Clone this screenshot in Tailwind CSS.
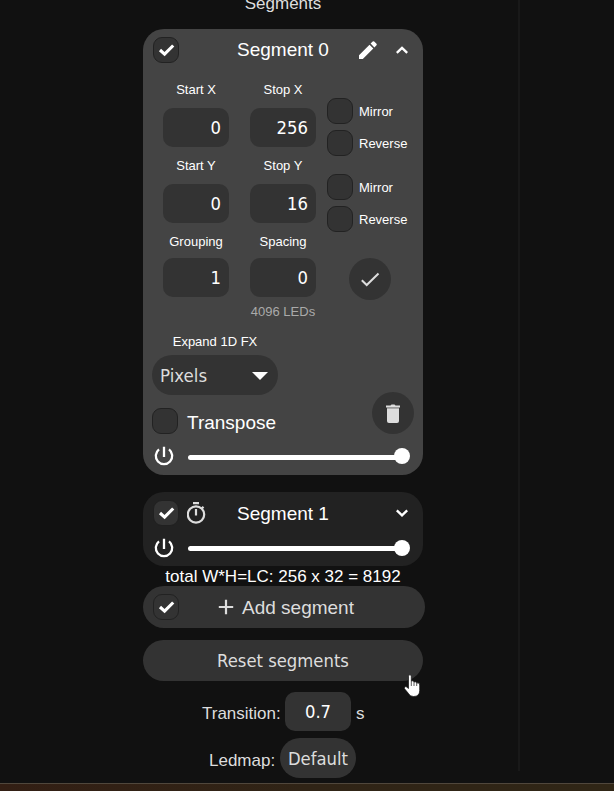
<!DOCTYPE html>
<html lang="en">
<head>
<meta charset="utf-8">
<title>Segments</title>
<script src="https://cdn.jsdelivr.net/npm/@tailwindcss/browser@4"></script>
</head>
<body class="bg-[#111]">
<svg class="hidden">
  <symbol id="tick" viewBox="0 0 26 26"><path d="M7 13 11.600 17.200 20.200 8.500" fill="none" stroke="#fff" stroke-width="3.100"/></symbol>
  <symbol id="power" viewBox="0 0 20 20"><path d="M10 .8V11M5 3.400a8.200 8.200 0 1 0 10 0" fill="none" stroke="#fff" stroke-width="2.300"/></symbol>
</svg>
<div class="relative flex h-[791px] w-[614px] flex-col overflow-hidden bg-[#111] font-['Liberation_Sans',Arial,sans-serif] text-white">
  <div class="flex h-[771px] w-[520px] shrink-0 flex-col border-r-2 border-[#191919] pl-[143px]">
    <div class="-mt-[6px] h-5 w-[280px] text-center text-[17px] leading-5 text-[#ddd]">Segments</div>

    <section class="mt-[15px] h-[446px] w-[280px] shrink-0 rounded-[21px] bg-[#444]">
      <header class="flex h-[41px] items-center pt-[1px] pl-[10px]">
        <span class="size-[26px] rounded-[9px] border border-[#222] bg-[#333]"><svg class="-m-px size-[26px]"><use href="#tick"/></svg></span>
        <h2 class="ml-[43px] w-[122px] text-center text-[19px] leading-6">Segment 0</h2>
        <svg class="ml-[14px] size-5" viewBox="0 0 20 20"><path d="M1 15.2V19h3.8L15.3 8.5 11.5 4.7zM18.5 5.3a1.100 1.100 0 0 0 0-1.500L16.200 1.500a1.100 1.100 0 0 0-1.500 0L12.600 3.600l3.800 3.800z" fill="#fff"/></svg>
        <svg class="ml-[18px] size-3" viewBox="0 0 12 12"><path d="M.8 8.800 6 3.800l5.200 5" fill="none" stroke="#fff" stroke-width="2.400"/></svg>
      </header>

      <div class="grid h-[251px] grid-cols-[86px_88px_1fr] grid-rows-[76px_76px_99px] pl-[10px] text-[13px] leading-4">
        <div class="flex flex-col items-center pt-3">Start X<div class="mt-[10px] h-[39px] w-[66px] rounded-[10px] bg-[#333] pr-2 text-right font-['DejaVu_Sans_Condensed','DejaVu_Sans',sans-serif] text-[18.300px] leading-[40px]">0</div></div>
        <div class="flex flex-col items-center pt-3">Stop X<div class="mt-[10px] h-[39px] w-[66px] rounded-[10px] bg-[#333] pr-2 text-right font-['DejaVu_Sans_Condensed','DejaVu_Sans',sans-serif] text-[18.300px] leading-[40px]">256</div></div>
        <div class="flex flex-col gap-1.5 pt-7">
          <div class="flex h-[26px] items-center gap-[6px]"><span class="size-[26px] rounded-[9px] border border-[#222] bg-[#333]"></span><span class="pt-[2px]">Mirror</span></div>
          <div class="flex h-[26px] items-center gap-[6px]"><span class="size-[26px] rounded-[9px] border border-[#222] bg-[#333]"></span><span class="pt-[2px]">Reverse</span></div>
        </div>
        <div class="flex flex-col items-center pt-3">Start Y<div class="mt-[10px] h-[39px] w-[66px] rounded-[10px] bg-[#333] pr-2 text-right font-['DejaVu_Sans_Condensed','DejaVu_Sans',sans-serif] text-[18.300px] leading-[40px]">0</div></div>
        <div class="flex flex-col items-center pt-3">Stop Y<div class="mt-[10px] h-[39px] w-[66px] rounded-[10px] bg-[#333] pr-2 text-right font-['DejaVu_Sans_Condensed','DejaVu_Sans',sans-serif] text-[18.300px] leading-[40px]">16</div></div>
        <div class="flex flex-col gap-1.5 pt-7">
          <div class="flex h-[26px] items-center gap-[6px]"><span class="size-[26px] rounded-[9px] border border-[#222] bg-[#333]"></span><span class="pt-[2px]">Mirror</span></div>
          <div class="flex h-[26px] items-center gap-[6px]"><span class="size-[26px] rounded-[9px] border border-[#222] bg-[#333]"></span><span class="pt-[2px]">Reverse</span></div>
        </div>
        <div class="flex flex-col items-center pt-3">Grouping<div class="mt-[8px] h-[39px] w-[66px] rounded-[10px] bg-[#333] pr-2 text-right font-['DejaVu_Sans_Condensed','DejaVu_Sans',sans-serif] text-[18.300px] leading-[40px]">1</div></div>
        <div class="flex flex-col items-center pt-3">Spacing<div class="mt-[8px] h-[39px] w-[66px] rounded-[10px] bg-[#333] pr-2 text-right font-['DejaVu_Sans_Condensed','DejaVu_Sans',sans-serif] text-[18.300px] leading-[40px]">0</div><div class="mt-[7px] text-[#aaa]">4096 LEDs</div></div>
        <div class="pt-9 pl-[22px]"><span class="flex size-[42px] items-center justify-center rounded-full bg-[#333]"><svg class="size-5" viewBox="0 0 20 20"><path d="M1.800 11.200 6.700 16 18.500 4.500" fill="none" stroke="#ddd" stroke-width="2"/></svg></span></div>
      </div>

      <div class="flex h-[115px] justify-between pr-[9px] pl-[9px]">
        <div class="w-[126px]">
          <div class="mt-[13px] text-center text-[13px] leading-4">Expand 1D FX</div>
          <div class="mt-[5px] flex h-10 items-center justify-between rounded-[20px] bg-[#333] pr-[10px] pl-2"><span class="pt-[2px] font-['DejaVu_Sans_Condensed','DejaVu_Sans',sans-serif] text-[18.500px] leading-5 text-[#ddd]">Pixels</span><svg class="mt-[2px] h-[8px] w-4" viewBox="0 0 16 8"><path d="M0 0h16L8 8z" fill="#fff"/></svg></div>
          <div class="mt-[13px] flex h-[26px] items-center gap-[9px] text-[19px]"><span class="size-[26px] shrink-0 rounded-[9px] border border-[#222] bg-[#333]"></span><span class="pt-[3px] leading-6">Transpose</span></div>
        </div>
        <span class="mt-[71px] flex size-[42px] items-center justify-center rounded-full bg-[#333]"><svg class="mt-px h-5 w-4" viewBox="0 0 16 20"><path d="M1 1.500h4.500L6.500 .500h3L10.500 1.500H15v2H1z" fill="#ddd"/><path d="M2 3.500h12V5H2z" fill="#aaa"/><path d="M2 5h12v12a2 2 0 0 1-2 2H4a2 2 0 0 1-2-2z" fill="#ddd"/></svg></span>
      </div>
      <div class="flex h-[39px] items-center pt-[3px] pl-[11px]">
        <svg class="mb-[2px] size-5"><use href="#power"/></svg>
        <div class="ml-[14px] flex h-4 w-[222px] items-center"><span class="h-[5px] w-[210px] rounded-l-full bg-white"></span><span class="-ml-1 size-4 shrink-0 -translate-y-[1px] rounded-full bg-white"></span></div>
      </div>
    </section>

    <section class="mt-[17px] h-[74px] w-[280px] shrink-0 rounded-[21px] bg-[#222]">
      <header class="flex h-[42px] items-center pl-[10px]">
        <span class="size-[26px] rounded-[9px] border border-[#202020] bg-[#333]"><svg class="-m-px size-[26px]"><use href="#tick"/></svg></span>
        <svg class="mb-px ml-2 size-[22px] shrink-0" viewBox="0 0 22 22"><g fill="none" stroke="#ddd" stroke-width="2.200"><circle cx="9" cy="12.500" r="8.200"/><path d="M6 1.100h6M9 7v6.500M14.500 6.800l2-2"/></g></svg>
        <h2 class="ml-[13px] w-[122px] pt-[2px] text-center text-[19px] leading-6">Segment 1</h2>
        <svg class="ml-[52px] size-3" viewBox="0 0 12 12"><path d="M.8 3.300 6 8.300l5.200-5" fill="none" stroke="#fff" stroke-width="2.400"/></svg>
      </header>
      <div class="flex h-[28px] items-center pt-[2px] pl-[11px]">
        <svg class="mb-[2px] size-5"><use href="#power"/></svg>
        <div class="ml-[14px] flex h-4 w-[222px] items-center"><span class="h-[5px] w-[210px] -translate-y-[1px] rounded-l-full bg-white"></span><span class="-ml-1 size-4 shrink-0 -translate-y-[1px] rounded-full bg-white"></span></div>
      </div>
    </section>

    <div class="h-5 w-[280px] pt-px text-center text-[17px] leading-5 whitespace-nowrap">total W*H=LC: 256 x 32 = 8192</div>

    <div class="flex h-[42px] w-[282px] shrink-0 items-center rounded-[21px] bg-[#333] pl-[10px]">
      <span class="size-[26px] rounded-[9px] border border-[#222] bg-[#333]"><svg class="-m-px size-[26px]"><use href="#tick"/></svg></span>
      <svg class="ml-[39px] size-4" viewBox="0 0 16 16"><path d="M8 .8v14.400M.8 8h14.400" stroke="#ddd" stroke-width="2.200"/></svg>
      <span class="ml-2 pt-[1px] text-[19px] leading-6 text-[#ddd]">Add segment</span>
    </div>

    <div class="mt-3 h-[41px] w-[280px] shrink-0 rounded-[21px] bg-[#333] text-center font-['DejaVu_Sans_Condensed','DejaVu_Sans',sans-serif] text-[18.300px] leading-[42px] text-[#ddd]">Reset segments</div>

    <div class="mt-[11px] flex h-[39px] shrink-0 items-center pl-[59px] text-[17px] text-[#ddd]"><span class="w-[83px] pt-[5px]">Transition:</span><span class="h-[39px] w-[66px] rounded-[10px] bg-[#333] text-center font-['DejaVu_Sans_Condensed','DejaVu_Sans',sans-serif] text-[18.300px] leading-[40px] text-white">0.7</span><span class="pt-[5px] pl-[5px]">s</span></div>
    <div class="mt-[7px] flex h-10 shrink-0 items-center pl-[66px] text-[17px] text-[#ddd]"><span class="w-[71px] pt-[6px]">Ledmap:</span><span class="h-10 w-[76px] rounded-[20px] bg-[#333] text-center font-['DejaVu_Sans_Condensed','DejaVu_Sans',sans-serif] text-[18.300px] leading-[42px]">Default</span></div>
  </div>
  <footer class="mt-3 h-2 w-full shrink-0 border-t border-[#50473c] bg-gradient-to-r from-[#331f14] via-[#302416] to-[#302616]"></footer>

  <svg class="absolute top-[674px] left-[403px] h-[24px] w-[18px]" viewBox="0 0 18 24"><path d="M5.500 2.200Q5.500.8 6.900.8T8.300 2.200V7Q10.500 6 11 8Q13 7 13.700 9Q16.700 8.200 16.700 11V16.500Q16.700 22.500 10.500 22.500Q7 22.500 5.500 19.500L1.400 14.600Q1 12.500 3 12.500L5.500 14.500Z" fill="#fff" stroke="#111" stroke-width=".7"/><path d="M8.300 7v5M11 8v4M13.700 9v3" stroke="#111" stroke-width=".7"/></svg>
</div>
</body>
</html>
